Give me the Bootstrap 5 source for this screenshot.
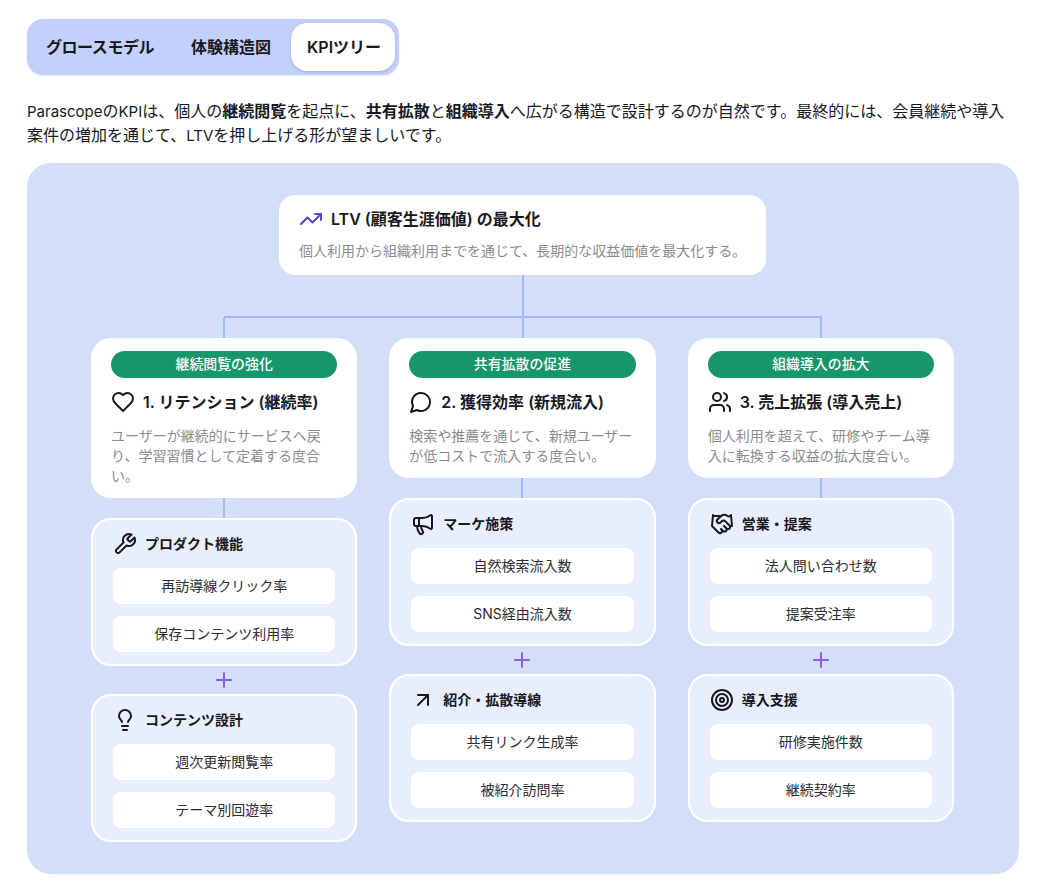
<!DOCTYPE html>
<html lang="ja">
<head>
  <meta charset="UTF-8">
  <meta name="viewport" content="width=device-width, initial-scale=1.0">
  <title>KPIツリー</title>
  <link rel="stylesheet" href="https://cdn.jsdelivr.net/npm/bootstrap@5.3.0/dist/css/bootstrap.min.css">
  <style>
    body { font-family: Inter, "Noto Sans CJK JP", sans-serif; color: #18181f; background: #fff; }
    .page-wrap { padding: 19px 23px 16px 27px; }
    .tab-strip { background: #c3d0fb; border-radius: 16px; padding: 4px; gap: 4px; box-shadow: 0 1px 2px rgba(80,90,200,.15); }
    .tab-item { font-size: 16px; font-weight: 600; line-height: 24px; padding: 12px 16px; border-radius: 16px; color: #18181f; }
    .tab-tight { letter-spacing: -.45px; margin-left: -1px; padding-right: 17px; }
    .tab-item.on { background: #fff; box-shadow: 0 1px 3px rgba(60,70,160,.25); padding-right: 14px; }
    .intro { font-size: 16px; line-height: 24px; margin: 24px 0 16px; }
    .intro b { font-weight: 700; }
    .lat { font-size: 15px; line-height: 1; }
    .tree-panel { background: #d3dff9; border-radius: 24px; padding: 32px 64px; }
    .top-box { width: 487px; height: 80px; background: #fff; border-radius: 16px; padding: 12px 20px; margin-right: 1px; }
    .top-title { font-size: 16px; font-weight: 600; line-height: 24px; }
    .top-sub { font-size: 14px; line-height: 20px; color: #8b8b8f; margin-top: 10px; white-space: nowrap; }
    .line-v { width: 2px; background: #a4b6f5; }
    .h-41 { height: 41px; }
    .h-20 { height: 20px; }
    .line-h { height: 2px; background: #a4b6f5; margin: 0 133px; }
    .branch { position: relative; }
    .drop { position: absolute; top: 2px; width: 2px; height: 20px; background: #a4b6f5; }
    .drop-a { left: 132px; }
    .drop-b { left: 431px; }
    .drop-c { left: 729px; }
    .col-stack { flex: 1 1 0; min-width: 0; }
    .cols { gap: 32px; margin-top: 20px; margin-right: 1px; }
    .head-box { background: #fff; border-radius: 20px; padding: 13px 20px 12px; }
    .tag-pill { background: #18966b; color: #fff; font-size: 13.9px; font-weight: 500; line-height: 27px; height: 27px; border-radius: 14px; text-align: center; }
    .head-title { font-size: 16px; font-weight: 600; line-height: 24px; margin-top: 12px; white-space: nowrap; }
    .head-desc { font-size: 14px; line-height: 20px; color: #8b8b8f; margin-top: 12px; }
    .grp-box { background: #e8eefc; border: 2px solid #fff; border-radius: 20px; padding: 12px 20px; }
    .grp-title { font-size: 14px; font-weight: 600; line-height: 24px; margin-bottom: 12px; }
    .metric { background: #fff; border-radius: 8px; height: 36px; line-height: 36px; font-size: 14px; text-align: center; color: #2c2c33; }
    .metric + .metric { margin-top: 12px; }
    .plus-row { height: 28px; }
    .ico { fill: none; stroke: currentColor; stroke-width: 2; stroke-linecap: round; stroke-linejoin: round; flex: none; }
    .ico-p { color: #4f46d8; }
    .ico-v { color: #8e5ce0; }
  </style>
</head>
<body>
  <div class="page-wrap">
    <div class="d-inline-flex tab-strip">
      <div class="tab-item tab-tight">グロースモデル</div>
      <div class="tab-item">体験構造図</div>
      <div class="tab-item on">KPIツリー</div>
    </div>

    <p class="intro"><span class="lat">Parascope</span>の<span class="lat">KPI</span>は、個人の<b>継続閲覧</b>を起点に、<b>共有拡散</b>と<b>組織導入</b>へ広がる構造で設計するのが自然です。最終的には、会員継続や導入案件の増加を通じて、<span class="lat">LTV</span>を押し上げる形が望ましいです。</p>

    <div class="tree-panel">
      <div class="d-flex flex-column align-items-center">
        <div class="top-box">
          <div class="d-flex align-items-center gap-2 top-title">
            <svg class="ico ico-p" width="24" height="24" viewBox="0 0 24 24"><polyline points="22 7 13.5 15.5 8.5 10.5 2 17"/><polyline points="16 7 22 7 22 13"/></svg>
            LTV (顧客生涯価値) の最大化
          </div>
          <div class="top-sub">個人利用から組織利用までを通じて、長期的な収益価値を最大化する。</div>
        </div>
        <div class="line-v h-41"></div>
      </div>
      <div class="branch">
        <div class="line-h"></div>
        <div class="drop drop-a"></div>
        <div class="drop drop-b"></div>
        <div class="drop drop-c"></div>
      </div>

      <div class="d-flex align-items-start cols">
        <!-- retention -->
        <div class="col-stack d-flex flex-column">
          <div class="head-box">
            <div class="tag-pill">継続閲覧の強化</div>
            <div class="d-flex align-items-center gap-2 head-title">
              <svg class="ico" width="24" height="24" viewBox="0 0 24 24"><path d="M19 14c1.49-1.46 3-3.21 3-5.5A5.5 5.5 0 0 0 16.5 3c-1.76 0-3 .5-4.5 2-1.5-1.5-2.74-2-4.5-2A5.5 5.5 0 0 0 2 8.5c0 2.3 1.5 4.05 3 5.5l7 7Z"/></svg>
              1. リテンション (継続率)
            </div>
            <div class="head-desc">ユーザーが継続的にサービスへ戻り、学習習慣として定着する度合い。</div>
          </div>
          <div class="line-v h-20 align-self-center"></div>
          <div class="grp-box">
            <div class="d-flex align-items-center gap-2 grp-title">
              <svg class="ico" width="24" height="24" viewBox="0 0 24 24"><path d="M14.7 6.3a1 1 0 0 0 0 1.4l1.6 1.6a1 1 0 0 0 1.4 0l3.77-3.77a6 6 0 0 1-7.94 7.94l-6.91 6.91a2.12 2.12 0 0 1-3-3l6.91-6.91a6 6 0 0 1 7.94-7.94l-3.76 3.76z"/></svg>
              プロダクト機能
            </div>
            <div class="metric">再訪導線クリック率</div>
            <div class="metric">保存コンテンツ利用率</div>
          </div>
          <div class="plus-row d-flex align-items-center justify-content-center">
            <svg class="ico ico-v" width="24" height="24" viewBox="0 0 24 24"><path d="M5 12h14"/><path d="M12 5v14"/></svg>
          </div>
          <div class="grp-box">
            <div class="d-flex align-items-center gap-2 grp-title">
              <svg class="ico" width="24" height="24" viewBox="0 0 24 24"><path d="M15 14c.2-1 .7-1.7 1.5-2.5 1-.9 1.5-2.2 1.5-3.5A6 6 0 0 0 6 8c0 1 .2 2.2 1.5 3.5.7.7 1.3 1.5 1.5 2.5"/><path d="M9 18h6"/><path d="M10 22h4"/></svg>
              コンテンツ設計
            </div>
            <div class="metric">週次更新閲覧率</div>
            <div class="metric">テーマ別回遊率</div>
          </div>
        </div>

        <!-- acquisition -->
        <div class="col-stack d-flex flex-column">
          <div class="head-box">
            <div class="tag-pill">共有拡散の促進</div>
            <div class="d-flex align-items-center gap-2 head-title">
              <svg class="ico" width="24" height="24" viewBox="0 0 24 24"><path d="M7.9 20A9 9 0 1 0 4 16.1L2 22Z"/></svg>
              2. 獲得効率 (新規流入)
            </div>
            <div class="head-desc">検索や推薦を通じて、新規ユーザーが低コストで流入する度合い。</div>
          </div>
          <div class="line-v h-20 align-self-center"></div>
          <div class="grp-box">
            <div class="d-flex align-items-center gap-2 grp-title">
              <svg class="ico" width="24" height="24" viewBox="0 0 24 24"><path d="M11 6a13 13 0 0 0 8.4-2.8A1 1 0 0 1 21 4v12a1 1 0 0 1-1.6.8A13 13 0 0 0 11 14H5a2 2 0 0 1-2-2V8a2 2 0 0 1 2-2z"/><path d="M6 14a12 12 0 0 0 2.4 7.2 2 2 0 0 0 3.2-2.4A8 8 0 0 1 10 14"/><path d="M8 6v8"/></svg>
              マーケ施策
            </div>
            <div class="metric">自然検索流入数</div>
            <div class="metric">SNS経由流入数</div>
          </div>
          <div class="plus-row d-flex align-items-center justify-content-center">
            <svg class="ico ico-v" width="24" height="24" viewBox="0 0 24 24"><path d="M5 12h14"/><path d="M12 5v14"/></svg>
          </div>
          <div class="grp-box">
            <div class="d-flex align-items-center gap-2 grp-title">
              <svg class="ico" width="24" height="24" viewBox="0 0 24 24"><path d="M7 7h10v10"/><path d="M7 17 17 7"/></svg>
              紹介・拡散導線
            </div>
            <div class="metric">共有リンク生成率</div>
            <div class="metric">被紹介訪問率</div>
          </div>
        </div>

        <!-- revenue -->
        <div class="col-stack d-flex flex-column">
          <div class="head-box">
            <div class="tag-pill">組織導入の拡大</div>
            <div class="d-flex align-items-center gap-2 head-title">
              <svg class="ico" width="24" height="24" viewBox="0 0 24 24"><path d="M16 21v-2a4 4 0 0 0-4-4H6a4 4 0 0 0-4 4v2"/><circle cx="9" cy="7" r="4"/><path d="M22 21v-2a4 4 0 0 0-3-3.87"/><path d="M16 3.13a4 4 0 0 1 0 7.75"/></svg>
              3. 売上拡張 (導入売上)
            </div>
            <div class="head-desc">個人利用を超えて、研修やチーム導入に転換する収益の拡大度合い。</div>
          </div>
          <div class="line-v h-20 align-self-center"></div>
          <div class="grp-box">
            <div class="d-flex align-items-center gap-2 grp-title">
              <svg class="ico" width="24" height="24" viewBox="0 0 24 24"><path d="m11 17 2 2a1 1 0 1 0 3-3"/><path d="m14 14 2.5 2.5a1 1 0 1 0 3-3l-3.88-3.88a3 3 0 0 0-4.24 0l-.88.88a1 1 0 1 1-3-3l2.81-2.81a5.79 5.79 0 0 1 7.06-.87l.47.28a2 2 0 0 0 1.42.25L21 4"/><path d="m21 3 1 11h-2"/><path d="M3 3 2 14l6.5 6.5a1 1 0 1 0 3-3"/><path d="M3 4h8"/></svg>
              営業・提案
            </div>
            <div class="metric">法人問い合わせ数</div>
            <div class="metric">提案受注率</div>
          </div>
          <div class="plus-row d-flex align-items-center justify-content-center">
            <svg class="ico ico-v" width="24" height="24" viewBox="0 0 24 24"><path d="M5 12h14"/><path d="M12 5v14"/></svg>
          </div>
          <div class="grp-box">
            <div class="d-flex align-items-center gap-2 grp-title">
              <svg class="ico" width="24" height="24" viewBox="0 0 24 24"><circle cx="12" cy="12" r="10"/><circle cx="12" cy="12" r="6"/><circle cx="12" cy="12" r="2"/></svg>
              導入支援
            </div>
            <div class="metric">研修実施件数</div>
            <div class="metric">継続契約率</div>
          </div>
        </div>
      </div>
    </div>
  </div>
  <script src="https://cdn.jsdelivr.net/npm/bootstrap@5.3.0/dist/js/bootstrap.bundle.min.js"></script>
</body>
</html>
